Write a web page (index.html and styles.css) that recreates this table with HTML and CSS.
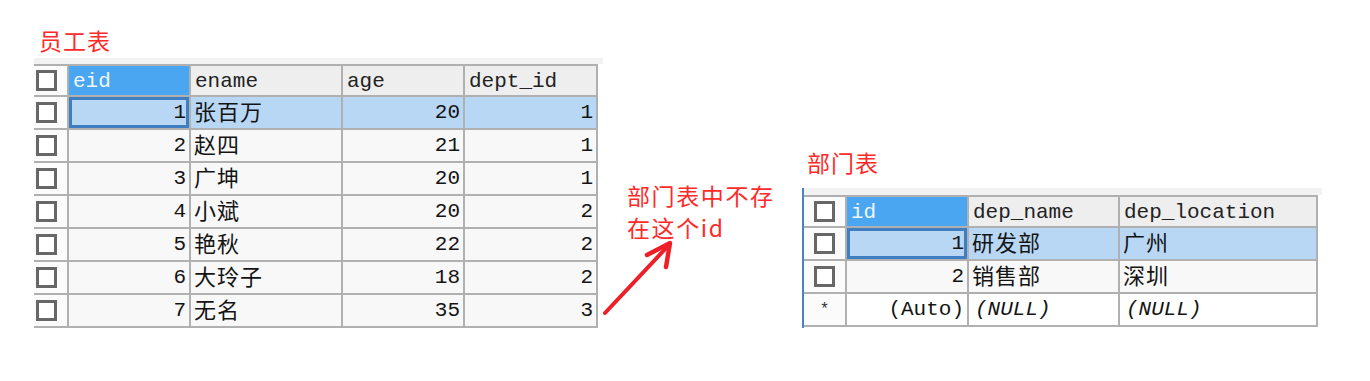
FILE: index.html
```html
<!DOCTYPE html>
<html lang="zh">
<head>
<meta charset="utf-8">
<title>员工表 / 部门表</title>
<link rel="stylesheet" href="styles.css">
</head>
<body>
<div class="page">
  <section class="left">
    <h2 class="title">员工表</h2>
    <div class="band band-left"></div>
    <div class="grid grid-emp">
      <div class="cell ck"><span class="box"></span></div>
      <div class="cell hd hd-sel">eid</div>
      <div class="cell hd">ename</div>
      <div class="cell hd">age</div>
      <div class="cell hd">dept_id</div>

      <div class="cell ck"><span class="box"></span></div>
      <div class="cell num sel cur">1</div>
      <div class="cell cn sel">张百万</div>
      <div class="cell num sel">20</div>
      <div class="cell num sel">1</div>

      <div class="cell ck"><span class="box"></span></div>
      <div class="cell num">2</div>
      <div class="cell cn">赵四</div>
      <div class="cell num">21</div>
      <div class="cell num">1</div>

      <div class="cell ck"><span class="box"></span></div>
      <div class="cell num">3</div>
      <div class="cell cn">广坤</div>
      <div class="cell num">20</div>
      <div class="cell num">1</div>

      <div class="cell ck"><span class="box"></span></div>
      <div class="cell num">4</div>
      <div class="cell cn">小斌</div>
      <div class="cell num">20</div>
      <div class="cell num">2</div>

      <div class="cell ck"><span class="box"></span></div>
      <div class="cell num">5</div>
      <div class="cell cn">艳秋</div>
      <div class="cell num">22</div>
      <div class="cell num">2</div>

      <div class="cell ck"><span class="box"></span></div>
      <div class="cell num">6</div>
      <div class="cell cn">大玲子</div>
      <div class="cell num">18</div>
      <div class="cell num">2</div>

      <div class="cell ck"><span class="box"></span></div>
      <div class="cell num">7</div>
      <div class="cell cn">无名</div>
      <div class="cell num">35</div>
      <div class="cell num">3</div>
    </div>
  </section>

  <section class="note">
    <p class="note-text">部门表中不存<br>在这个id</p>
    <svg class="arrow" width="200" height="340" viewBox="0 0 200 340" aria-hidden="true">
      <line x1="5" y1="313" x2="68" y2="246" stroke="#ee1f26" stroke-width="4" stroke-linecap="round"/>
      <polyline points="47,255 70,243 66,267" fill="none" stroke="#ee1f26" stroke-width="4.5" stroke-linecap="round" stroke-linejoin="round"/>
    </svg>
  </section>

  <section class="right">
    <h2 class="title title-right">部门表</h2>
    <div class="rwrap">
      <div class="band band-right"></div>
      <div class="grid grid-dep">
        <div class="cell ck ck-c"><span class="box"></span></div>
        <div class="cell hd hd-sel">id</div>
        <div class="cell hd">dep_name</div>
        <div class="cell hd">dep_location</div>

        <div class="cell ck ck-c"><span class="box"></span></div>
        <div class="cell num sel cur">1</div>
        <div class="cell cn sel">研发部</div>
        <div class="cell cn sel">广州</div>

        <div class="cell ck ck-c"><span class="box"></span></div>
        <div class="cell num">2</div>
        <div class="cell cn">销售部</div>
        <div class="cell cn">深圳</div>

        <div class="cell ck ck-c star">*</div>
        <div class="cell num newrow">(Auto)</div>
        <div class="cell newrow null">(NULL)</div>
        <div class="cell newrow null">(NULL)</div>
      </div>
    </div>
  </section>
</div>
</body>
</html>
```

FILE: styles.css
```css
html, body {
  margin: 0;
  padding: 0;
  background: #ffffff;
}

.page {
  display: flex;
  align-items: flex-start;
  padding-left: 34px;
  height: 381px;
  box-sizing: border-box;
  font-family: "Liberation Mono", "Noto Sans CJK SC", monospace;
}

.title {
  margin: 0;
  font-family: "Noto Sans CJK SC", sans-serif;
  font-weight: 400;
  font-size: 23px;
  line-height: 28px;
  color: #ff2a2a;
  letter-spacing: 1px;
}

/* left block */
.left {
  width: 566px;
  padding-top: 26px;
  flex: none;
}

.left .title {
  padding-left: 5px;
}

.band {
  background: #f2f2f2;
  height: 6px;
}

.band-left {
  margin-top: 4px;
  width: 569px;
}

.grid {
  display: grid;
  gap: 2px;
  background: #b0b0b0;
  padding: 2px 2px 2px 0;
}

.grid-emp {
  width: 564px;
  box-sizing: border-box;
  grid-template-columns: 33px 120px 150px 120px 131px;
  grid-template-rows: 29px repeat(7, 31px);
}

.cell {
  display: flex;
  align-items: center;
  background: #f8f8f8;
  color: #141414;
  font-size: 21px;
  line-height: 1;
  padding: 0 4px;
  white-space: nowrap;
  min-width: 0;
}

.ck {
  background: #fbfbfb;
  padding: 0 0 0 2px;
}

.ck-c {
  justify-content: center;
  padding: 0;
}

.box {
  display: block;
  width: 15px;
  height: 15px;
  border: 3px solid #676767;
  background: #ffffff;
}

.hd {
  background: #eeeeee;
  color: #222222;
  padding-left: 4px;
  padding-top: 2px;
}

.hd-sel {
  background: #4aa6f1;
  color: #eef6ff;
}

.num {
  justify-content: flex-end;
  padding-right: 3px;
}

.cn {
  font-family: "Noto Sans CJK SC", sans-serif;
  font-size: 22px;
  font-weight: 400;
  letter-spacing: 1px;
  padding-left: 3px;
  padding-bottom: 6px;
}

.sel {
  background: #b8d7f4;
}

.cur {
  box-shadow: inset 0 0 0 3px #3f7fc1;
}

/* annotation */
.note {
  position: relative;
  width: 202px;
  height: 340px;
  flex: none;
}

.note-text {
  margin: 0;
  padding: 179px 0 0 27px;
  font-family: "Noto Sans CJK SC", sans-serif;
  font-weight: 400;
  font-size: 23px;
  line-height: 32px;
  letter-spacing: 1.6px;
  color: #ff2a2a;
}

.arrow {
  position: absolute;
  left: 0;
  top: 0;
}

/* right block */
.right {
  width: 520px;
  flex: none;
  padding-top: 148px;
}

.title-right {
  padding-left: 5px;
}

.rwrap {
  margin-top: 12px;
  border-left: 2px solid #4b84c6;
  padding-bottom: 1px;
}

.band-right {
  height: 7px;
  width: 518px;
}

.grid-dep {
  width: 514px;
  box-sizing: border-box;
  grid-template-columns: 41px 120px 149px 196px;
  grid-template-rows: 29px repeat(3, 31px);
}

.star {
  font-size: 16px;
  color: #333333;
}

.newrow {
  background: #ffffff;
}

.null {
  font-style: italic;
  padding-left: 6px;
}
```
